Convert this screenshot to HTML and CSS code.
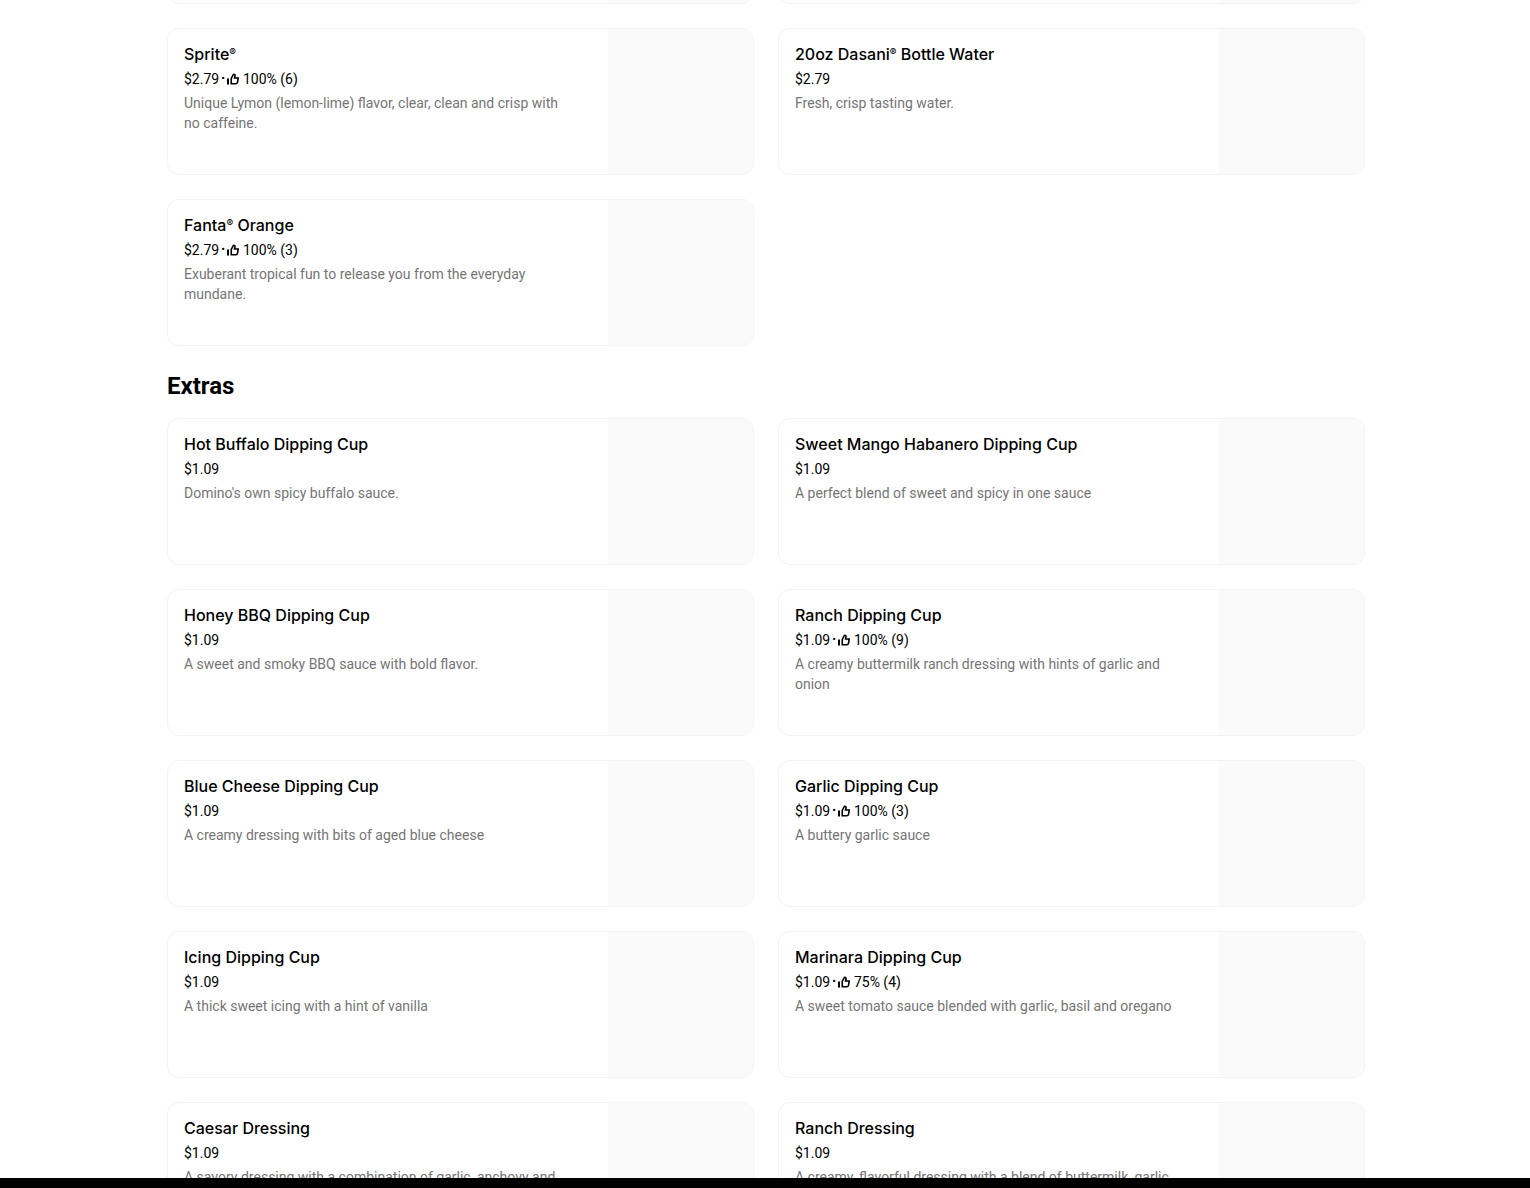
FILE: index.html
```html
<!DOCTYPE html>
<html lang="en">
<head>
    <meta charset="UTF-8">
    <meta name="viewport" content="width=device-width, initial-scale=1.0">
    <title>Menu</title>
    <link rel="stylesheet" href="styles.css">
</head>
<body>
    <svg class="sprite" aria-hidden="true">
        <symbol id="thumb" viewBox="0 0 24 24">
            <path d="M0 11h4v12H0z" fill="currentColor"/>
            <path d="M8.500 21.500V11L13 2.500c2.500 0 3.500 1.500 3 3.500l-1 4h7.500L21 18.500c-.4 2-1.500 3-3.500 3z" fill="none" stroke="currentColor" stroke-width="3.200"/>
        </symbol>
    </svg>

    <main class="menu">
        <section class="drinks">
            <ul class="grid">
                <li class="card"><div class="info"></div><div class="photo"></div></li>
                <li class="card"><div class="info"></div><div class="photo"></div></li>
                <li>
                    <a class="card" href="#">
                        <div class="info">
                            <h3>Sprite<sup>®</sup></h3>
                            <p class="price">$2.79<span class="dot">•</span><svg class="thumb"><use href="#thumb"/></svg>100% (6)</p>
                            <p class="desc">Unique Lymon (lemon-lime) flavor, clear, clean and crisp with no caffeine.</p>
                        </div>
                        <div class="photo"></div>
                    </a>
                </li>
                <li>
                    <a class="card" href="#">
                        <div class="info">
                            <h3>20oz Dasani<sup>®</sup> Bottle Water</h3>
                            <p class="price">$2.79</p>
                            <p class="desc">Fresh, crisp tasting water.</p>
                        </div>
                        <div class="photo"></div>
                    </a>
                </li>
                <li>
                    <a class="card" href="#">
                        <div class="info">
                            <h3>Fanta<sup>®</sup> Orange</h3>
                            <p class="price">$2.79<span class="dot">•</span><svg class="thumb"><use href="#thumb"/></svg>100% (3)</p>
                            <p class="desc">Exuberant tropical fun to release you from the everyday mundane.</p>
                        </div>
                        <div class="photo"></div>
                    </a>
                </li>
            </ul>
        </section>

        <section>
            <h2>Extras</h2>
            <ul class="grid">
                <li>
                    <a class="card" href="#">
                        <div class="info">
                            <h3>Hot Buffalo Dipping Cup</h3>
                            <p class="price">$1.09</p>
                            <p class="desc">Domino's own spicy buffalo sauce.</p>
                        </div>
                        <div class="photo"></div>
                    </a>
                </li>
                <li>
                    <a class="card" href="#">
                        <div class="info">
                            <h3>Sweet Mango Habanero Dipping Cup</h3>
                            <p class="price">$1.09</p>
                            <p class="desc">A perfect blend of sweet and spicy in one sauce</p>
                        </div>
                        <div class="photo"></div>
                    </a>
                </li>
                <li>
                    <a class="card" href="#">
                        <div class="info">
                            <h3>Honey BBQ Dipping Cup</h3>
                            <p class="price">$1.09</p>
                            <p class="desc">A sweet and smoky BBQ sauce with bold flavor.</p>
                        </div>
                        <div class="photo"></div>
                    </a>
                </li>
                <li>
                    <a class="card" href="#">
                        <div class="info">
                            <h3>Ranch Dipping Cup</h3>
                            <p class="price">$1.09<span class="dot">•</span><svg class="thumb"><use href="#thumb"/></svg>100% (9)</p>
                            <p class="desc">A creamy buttermilk ranch dressing with hints of garlic and onion</p>
                        </div>
                        <div class="photo"></div>
                    </a>
                </li>
                <li>
                    <a class="card" href="#">
                        <div class="info">
                            <h3>Blue Cheese Dipping Cup</h3>
                            <p class="price">$1.09</p>
                            <p class="desc">A creamy dressing with bits of aged blue cheese</p>
                        </div>
                        <div class="photo"></div>
                    </a>
                </li>
                <li>
                    <a class="card" href="#">
                        <div class="info">
                            <h3>Garlic Dipping Cup</h3>
                            <p class="price">$1.09<span class="dot">•</span><svg class="thumb"><use href="#thumb"/></svg>100% (3)</p>
                            <p class="desc">A buttery garlic sauce</p>
                        </div>
                        <div class="photo"></div>
                    </a>
                </li>
                <li>
                    <a class="card" href="#">
                        <div class="info">
                            <h3>Icing Dipping Cup</h3>
                            <p class="price">$1.09</p>
                            <p class="desc">A thick sweet icing with a hint of vanilla</p>
                        </div>
                        <div class="photo"></div>
                    </a>
                </li>
                <li>
                    <a class="card" href="#">
                        <div class="info">
                            <h3>Marinara Dipping Cup</h3>
                            <p class="price">$1.09<span class="dot">•</span><svg class="thumb"><use href="#thumb"/></svg>75% (4)</p>
                            <p class="desc">A sweet tomato sauce blended with garlic, basil and oregano</p>
                        </div>
                        <div class="photo"></div>
                    </a>
                </li>
                <li>
                    <a class="card" href="#">
                        <div class="info">
                            <h3>Caesar Dressing</h3>
                            <p class="price">$1.09</p>
                            <p class="desc">A savory dressing with a combination of garlic, anchovy and</p>
                        </div>
                        <div class="photo"></div>
                    </a>
                </li>
                <li>
                    <a class="card" href="#">
                        <div class="info">
                            <h3>Ranch Dressing</h3>
                            <p class="price">$1.09</p>
                            <p class="desc">A creamy, flavorful dressing with a blend of buttermilk, garlic</p>
                        </div>
                        <div class="photo"></div>
                    </a>
                </li>
            </ul>
        </section>
    </main>
    <footer class="bar"></footer>
</body>
</html>
```
FILE: styles.css
```css
* {
    box-sizing: border-box;
}

body {
    display: flex;
    flex-direction: column;
    height: 100vh;
    margin: 0;
    overflow: hidden;
    background-color: #fff;
    color: #000;
    font-family: Roboto, "Liberation Sans", sans-serif;
}

h2, h3, p, ul {
    margin: 0;
    padding: 0;
}

.sprite {
    display: none;
}

.menu {
    flex: 1;
    min-height: 0;
    overflow: hidden;
    padding: 0 165px 0 167px;
}

/* list is scrolled so only the end of the first row shows */
.drinks {
    margin-top: -143px;
}

.grid {
    display: grid;
    grid-template-columns: 1fr 1fr;
    gap: 24px;
    list-style: none;
}

.card {
    display: flex;
    min-height: 147px;
    border: 1px solid #f3f3f3;
    border-radius: 12px;
    overflow: hidden;
    color: inherit;
    text-decoration: none;
}

.info {
    flex: 1;
    padding: 13px 36px 13px 16px;
}

.photo {
    width: 145px;
    background-color: #fafafa;
}

h2 {
    padding: 24px 0 16px;
    font-size: 24px;
    font-weight: 700;
    line-height: 32px;
}

h3 {
    font-family: Inter, "Liberation Sans", sans-serif;
    font-size: 16px;
    font-weight: 500;
    line-height: 24px;
}

sup {
    font-size: 10px;
    line-height: 0;
    vertical-align: 4px;
}

.price {
    display: flex;
    align-items: center;
    margin-top: 3px;
    font-size: 14px;
    line-height: 20px;
}

.dot {
    margin: 0 2px;
    font-size: 11px;
}

.thumb {
    width: 12px;
    height: 12px;
    margin-right: 4px;
}

.desc {
    margin-top: 4px;
    color: #757575;
    font-size: 14px;
    line-height: 20px;
}

.bar {
    height: 10px;
    background-color: #000;
}
```
